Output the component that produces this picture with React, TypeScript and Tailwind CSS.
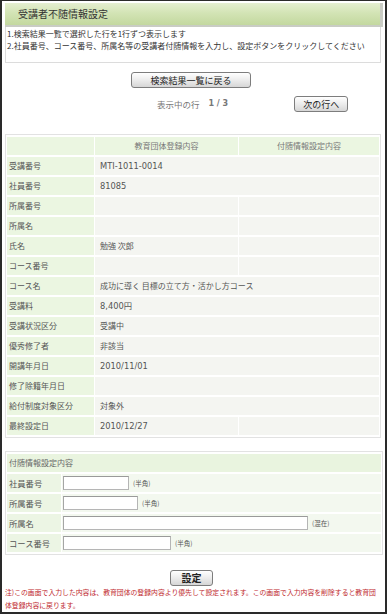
import React from "react";

const rows: { label: string; v: string; span: boolean; latin?: boolean }[] = [
  { label: "受講番号", v: "MTI-1011-0014", span: true, latin: true },
  { label: "社員番号", v: "81085", span: true, latin: true },
  { label: "所属番号", v: "", span: false },
  { label: "所属名", v: "", span: false },
  { label: "氏名", v: "勉強 次郎", span: false },
  { label: "コース番号", v: "", span: false },
  { label: "コース名", v: "成功に導く 目標の立て方・活かし方コース", span: true },
  { label: "受講料", v: "8,400円", span: true, latin: true },
  { label: "受講状況区分", v: "受講中", span: true },
  { label: "優秀修了者", v: "非該当", span: true },
  { label: "開講年月日", v: "2010/11/01", span: true, latin: true },
  { label: "修了除籍年月日", v: "", span: true },
  { label: "給付制度対象区分", v: "対象外", span: true },
  { label: "最終設定日", v: "2010/12/27", span: false, latin: true },
];

const inputs: { label: string; w: string; note: string }[] = [
  { label: "社員番号", w: "w-[66px]", note: "(半角)" },
  { label: "所属番号", w: "w-[75px]", note: "(半角)" },
  { label: "所属名", w: "w-[245px]", note: "(混在)" },
  { label: "コース番号", w: "w-[108px]", note: "(半角)" },
];

const jp = "font-['Noto_Sans_CJK_JP',sans-serif]";
const latin = "font-['DejaVu_Sans','Noto_Sans_CJK_JP',sans-serif]";

function Btn({ children, className }: { children: React.ReactNode; className: string }) {
  return (
    <div
      className={`flex items-center justify-center rounded-[3px] border border-[#7d7d7d] bg-[linear-gradient(180deg,#ffffff_0%,#ececec_50%,#d6d6d6_100%)] text-[#222] ${className}`}
    >
      {children}
    </div>
  );
}

export default function App() {
  return (
    <div className={`w-[388px] h-[614px] bg-white ${jp}`}>
      <div className="w-[387px] h-[614px] border-t border-l-2 border-r-2 border-b-2 border-[#2a2a2a] pl-[3px] pt-[2px] flex flex-col">
        {/* header */}
        <div className="w-[378px] h-[24px] border-r-[3px] border-b-2 border-[#c9ccc4] bg-[linear-gradient(180deg,#e4eed0_0%,#d3e4b5_45%,#c3d89f_100%)] flex items-center pl-[13px]">
          <span className="text-[10px] leading-none text-[#333]">受講者不随情報設定</span>
        </div>
        {/* instructions */}
        <div className="w-[376px] h-[37px] border-l border-r border-b border-[#dcdcdc] pl-px pt-[1px] text-[8px] leading-[12px] text-[#333]">
          <div>1.検索結果一覧で選択した行を1行ずつ表示します</div>
          <div>2.社員番号、コース番号、所属名等の受講者付随情報を入力し、設定ボタンをクリックしてください</div>
        </div>
        {/* back button */}
        <div className="mt-[9px] ml-[126px]">
          <Btn className="w-[120px] h-[16px] text-[9px] leading-none">検索結果一覧に戻る</Btn>
        </div>
        {/* pager */}
        <div className="mt-[8px] flex items-center h-[16px]">
          <div className="ml-[152px] text-[8.5px] leading-none text-[#777] flex items-center">
            <span>表示中の行</span>
            <span className={`ml-[9px] font-bold text-[8px] ${latin}`}>1 / 3</span>
          </div>
          <Btn className="ml-[66px] w-[54px] h-[16px] text-[9px] leading-none">次の行へ</Btn>
        </div>
        {/* table 1 */}
        <table className="mt-[22px] w-[376px] table-fixed border-separate border-spacing-x-px border-spacing-y-[2px] border border-[#e2e2e2] text-[8px] leading-none">
          <colgroup>
            <col className="w-[87px]" />
            <col className="w-[143px]" />
            <col className="w-[140px]" />
          </colgroup>
          <tbody>
            <tr className="h-[18px]">
              <td className="bg-[#ebf6e1]"></td>
              <td className="bg-[#ebf6e1] text-center text-[#777]">教育団体登録内容</td>
              <td className="bg-[#ebf6e1] text-center text-[#777]">付随情報設定内容</td>
            </tr>
            {rows.map((r) => (
              <tr key={r.label} className="h-[18px]">
                <td className="bg-[#ebf6e1] pl-[2px] text-[#555] whitespace-nowrap">{r.label}</td>
                {r.span ? (
                  <td colSpan={2} className={`bg-[#f4f5f1] pl-[5px] text-[#555] whitespace-nowrap ${r.latin ? latin + " text-[8.3px]" : ""}`}>
                    {r.v}
                  </td>
                ) : (
                  <>
                    <td className={`bg-[#f4f5f1] pl-[5px] text-[#555] whitespace-nowrap ${r.latin ? latin + " text-[8.3px]" : ""}`}>{r.v}</td>
                    <td className="bg-[#f4f5f1]"></td>
                  </>
                )}
              </tr>
            ))}
          </tbody>
        </table>
        {/* table 2 */}
        <table className="mt-[13px] w-[376px] table-fixed border-separate border-spacing-x-px border-spacing-y-[2px] border border-[#e2e2e2] text-[8px] leading-none">
          <colgroup>
            <col className="w-[54px]" />
            <col className="w-[319px]" />
          </colgroup>
          <tbody>
            <tr className="h-[18px]">
              <td colSpan={2} className="bg-[#e9f4df] pl-[2px] text-[#666]">付随情報設定内容</td>
            </tr>
            {inputs.map((r) => (
              <tr key={r.label} className="h-[18px]">
                <td className="bg-[#ecf5e4] pl-[2px] text-[#555] text-[8.3px] whitespace-nowrap">{r.label}</td>
                <td className="bg-[#f3f8ef] pl-px">
                  <div className="flex items-center">
                    <div className={`${r.w} h-[14px] bg-white border border-[#b5b5b5] border-t-[#9a9a9a] border-l-[#a5a5a5]`}></div>
                    <span className="ml-[4px] text-[6.5px] text-[#555] leading-none">{r.note}</span>
                  </div>
                </td>
              </tr>
            ))}
          </tbody>
        </table>
        {/* submit */}
        <div className="mt-[15px] ml-[165px]">
          <Btn className="w-[43px] h-[16px] text-[10px] font-bold leading-none">設定</Btn>
        </div>
        <div className="mt-0 text-[6.85px] leading-[13px] text-[#c0282d] whitespace-nowrap">
          <div>注)この画面で入力した内容は、教育団体の登録内容より優先して設定されます。この画面で入力内容を削除すると教育団</div>
          <div>体登録内容に戻ります。</div>
        </div>
      </div>
    </div>
  );
}
